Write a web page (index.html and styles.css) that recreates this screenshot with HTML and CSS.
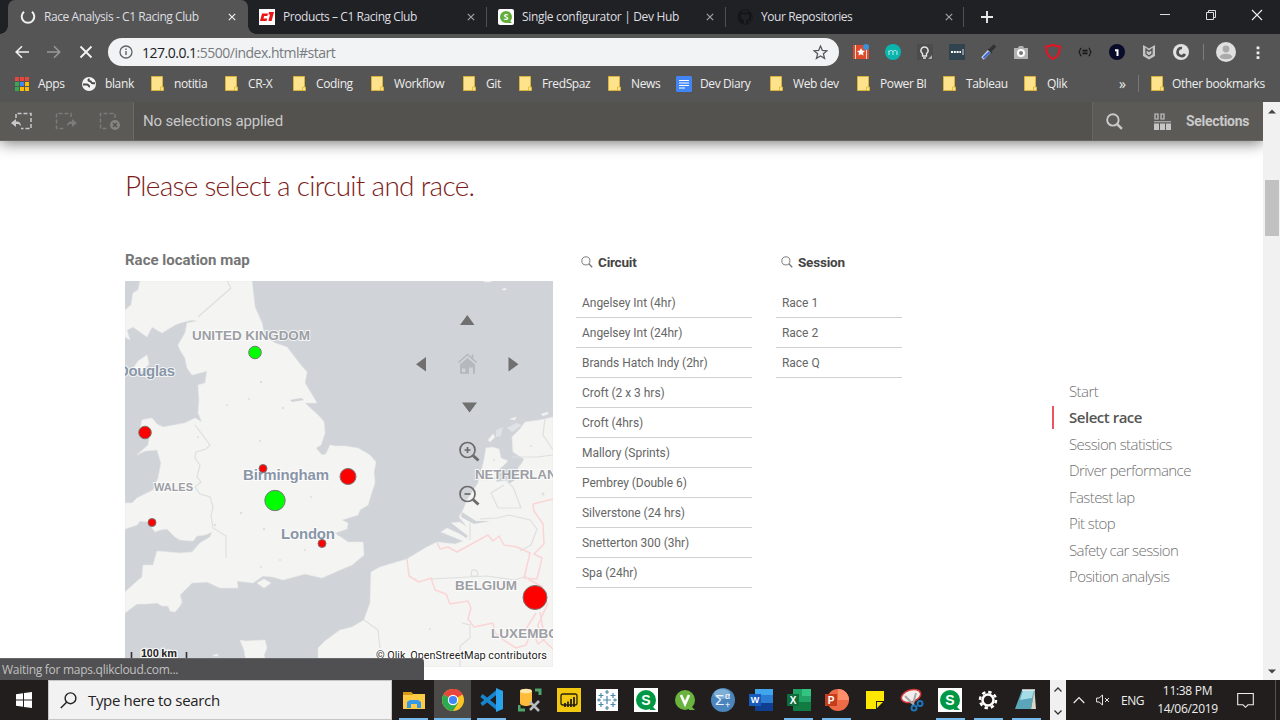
FILE: index.html
```html
<!DOCTYPE html>
<html lang="en">
<head>
<meta charset="utf-8">
<title>Race Analysis - C1 Racing Club</title>
<link rel="stylesheet" href="styles.css">
</head>
<body>
<svg class="defs" aria-hidden="true">
  <symbol id="x" viewBox="0 0 10 10"><path d="M1 1l8 8M9 1l-8 8" fill="none" stroke="currentColor" stroke-width="1.5"/></symbol>
  <symbol id="folder" viewBox="0 0 13 15"><path d="M.5.5h11v10l1 1v3H.5z" fill="#ffe38c" stroke="#d8b43c"/><path d="M9.5 14v-3h3" fill="none" stroke="#e3bd3f"/></symbol>
  <symbol id="lens" viewBox="0 0 16 16"><circle cx="6.5" cy="6.5" r="5.4" fill="none" stroke="currentColor" stroke-width="var(--w)"/><path d="M10.4 10.4l4.6 4.6" stroke="currentColor" stroke-width="calc(var(--w) * 1.3)"/></symbol>
  <symbol id="q" viewBox="0 0 24 24"><path d="M0 0h24v24H0z" fill="#fff"/><path d="M16 16l6 6h-6z" fill="#009845"/><circle cx="12" cy="12" r="10" fill="#009845"/><text x="12" y="17" text-anchor="middle" font-size="14" font-weight="700" fill="#fff">S</text></symbol>
</svg>

<header class="tabs">
  <div class="tab active">
    <svg class="fav" viewBox="0 0 16 16"><path d="M4 2.7A6.3 6.3 0 1 0 12 2.7" fill="none" stroke="#f1f1f1" stroke-width="2"/></svg>
    <span class="t t1">Race Analysis - C1 Racing Club</span><svg class="close"><use href="#x"/></svg>
  </div>
  <div class="tab tab2">
    <svg class="fav" viewBox="0 0 16 16"><path d="M0 0h16v16H0z" fill="#fff"/><path d="M9 4.500H3L1 12h6.500l.7-2.500H4.500l.6-2.500h3.200zM10 3h5l-2.400 9H9.400l1.600-6.500H9.400z" fill="#ed1414"/></svg>
    <span class="t t2">Products – C1 Racing Club</span><svg class="close"><use href="#x"/></svg>
  </div>
  <div class="tab tab3">
    <svg class="fav" viewBox="0 0 16 16"><rect width="16" height="16" rx="2" fill="#fff"/><path d="M11 11l3 3h-4z" fill="#52a535"/><circle cx="8" cy="8" r="6" fill="#62ac3a"/><text x="8" y="11.300" text-anchor="middle" font-size="9" font-weight="700" fill="#fff">S</text></svg>
    <span class="t t3">Single configurator | Dev Hub</span><svg class="close"><use href="#x"/></svg>
  </div>
  <div class="tab tab4">
    <svg class="fav" viewBox="0 0 16 16"><path d="M6 15v-2.500C3 13 3 11 2 11M10 15v-3.500c3-.5 3.500-3 3-5 .2-1.500-.3-2.500-.5-3-1 0-2 1-2 1H5.500s-1-1-2-1c-.5 1-.7 2-.3 3-.7 2-.2 4.500 3 5" fill="none" stroke="#141416" stroke-width="1.700"/><circle cx="8" cy="8" r="7.200" fill="none" stroke="#17181a" stroke-width="1.200"/></svg>
    <span class="t t4">Your Repositories</span><svg class="close"><use href="#x"/></svg>
  </div>
  <svg class="plus" viewBox="0 0 12 12"><path d="M6 0v12M0 6h12" stroke="#e8e8e8" stroke-width="1.900"/></svg>
  <div class="win">
    <svg viewBox="0 0 12 12"><path d="M1 5.500h10" stroke="#ddd"/></svg>
    <svg viewBox="0 0 12 12"><path d="M1.500 3.500h7v7h-7zM3.500 3.500v-2h7v7h-2" fill="none" stroke="#ddd"/></svg>
    <svg viewBox="0 0 12 12"><path d="M1 1l10 10M11 1L1 11" stroke="#eee" stroke-width="1.100"/></svg>
  </div>
</header>

<section class="toolbar">
  <svg class="nav" viewBox="0 0 14 14"><path d="M14 7H1.500M7 1.200L1.200 7 7 12.800" fill="none" stroke="#f1f1f1" stroke-width="1.600"/></svg>
  <svg class="nav" viewBox="0 0 14 14"><path d="M0 7h12.500M7 1.200L12.800 7 7 12.800" fill="none" stroke="#999" stroke-width="1.500"/></svg>
  <svg class="nav" viewBox="0 0 14 14"><path d="M1.500 1.500l11 11M12.500 1.500l-11 11" stroke="#f4f4f4" stroke-width="1.800"/></svg>
  <div class="url">
    <svg viewBox="0 0 14 14"><circle cx="7" cy="7" r="6" fill="none" stroke="#5f6368" stroke-width="1.300"/><path d="M7 6v4M7 3.500v1.400" stroke="#5f6368" stroke-width="1.400"/></svg>
    <span class="addr"><b>127.0.0.1</b>:5500/index.html#start</span>
    <svg class="star" viewBox="0 0 14 14"><path d="M7 1l1.700 4.100 4.400.3-3.400 2.800 1.100 4.300L7 10.200l-3.800 2.300 1.100-4.300L.9 5.400l4.400-.3z" fill="none" stroke="#55585c" stroke-width="1.200"/></svg>
  </div>
  <div class="ext">
    <svg viewBox="0 0 16 16"><path d="M0 1h16v14H0z" fill="#e8e0d8"/><path d="M0 1h2v14H0zM3 1h10v14H3zM14 1h2v14h-2z" fill="#dd4b2a"/><path d="M8 4l1.200 2.600 2.800.3-2 1.900.5 2.800L8 10.300l-2.500 1.300.5-2.800-2-1.900 2.800-.3z" fill="#fff"/><circle cx="13" cy="3" r="3" fill="#3a91dd"/></svg>
    <svg viewBox="0 0 16 16"><circle cx="8" cy="8" r="8" fill="#0ab5ad"/><path d="M4 11V6.500M4 8c0-2 4-2 4 0v3M8 8c0-2 4-2 4 0v3" fill="none" stroke="#c4efed"/></svg>
    <svg viewBox="0 0 16 16"><path d="M0 0h16v16H0z" fill="#4c4c4c"/><path d="M5.500 9.500c-3-2-1.500-6.500 2-6.500s5 4.500 2 6.500V12h-4zM6 14h3" fill="none" stroke="#e5e5e5" stroke-width="1.400"/><path d="M15 11v4h-4z" fill="#aaa"/></svg>
    <svg viewBox="0 0 16 16"><path d="M0 0h16v16H0z" fill="#324350"/><path d="M2 8h10" stroke="#fff" stroke-width="2" stroke-dasharray="2 .8"/><path d="M14 5v6" stroke="#ddd"/></svg>
    <svg viewBox="0 0 16 16"><path d="M1.500 14.500l7.500-8" stroke="#c8d4e8" stroke-width="3.600"/><path d="M2.500 14l6-6" stroke="#3c66cf" stroke-width="2.200"/><path d="M8.500 7l5.500-5.500" stroke="#303235" stroke-width="3.600"/><path d="M7 5l4 4" stroke="#303235" stroke-width="1.500"/></svg>
    <svg viewBox="0 0 16 16"><path d="M1 4h4l1-2h4l1 2h4v11H1z" fill="#b2b2b2"/><circle cx="8" cy="9" r="4" fill="#fff"/><circle cx="8" cy="9" r="2" fill="#777"/></svg>
    <svg viewBox="0 0 16 16"><path d="M8 .8c2 1 4.500 1.500 7 1.700 0 6-2 10-7 12.500C3 12.500 1 8.500 1 2.500 3.500 2.300 6 1.800 8 .8z" fill="none" stroke="#ed1020" stroke-width="1.900"/></svg>
    <svg viewBox="0 0 16 16"><path d="M4.500 4C2 4 4 8 1.500 8 4 8 2 12 4.500 12M11.500 4c2.500 0 .5 4 3 4-2.500 0-.5 4-3 4M5.500 6.300h5M5.500 8h5M5.500 9.700h5" fill="none" stroke="#161616" stroke-width="1.200"/></svg>
    <svg viewBox="0 0 16 16"><circle cx="8" cy="8" r="8" fill="#080c28"/><path d="M6 6.200h2.500V12" fill="none" stroke="#fff" stroke-width="2"/></svg>
    <svg viewBox="0 0 16 16"><path d="M2 1l6 3.500L14 1v11l-6 3.500L2 12z" fill="#c4c4c4"/><path d="M5 10V5l3 2.500L11 5v5l-3 2z" fill="none" stroke="#555" stroke-width="1.300"/></svg>
    <svg viewBox="0 0 16 16"><circle cx="8" cy="8" r="8" fill="#e2e2e2"/><path d="M9 4a4 4 0 1 0 3 6" fill="none" stroke="#505050" stroke-width="2.600"/></svg>
  </div>
  <i class="bar"></i>
  <svg class="avatar" viewBox="0 0 20 20"><circle cx="10" cy="10" r="10" fill="#e0e0e0"/><circle cx="10" cy="7" r="3.400" fill="#aaa"/><path d="M3.500 15c1-4.500 12-4.500 13 0-2 3-11 3-13 0z" fill="#aaa"/></svg>
  <svg class="dots" viewBox="0 0 4 16"><path d="M2 1.500v13.500" stroke="#eee" stroke-width="3" stroke-dasharray="3 2.300"/></svg>
</section>

<nav class="bookmarks">
  <a><svg class="b15" viewBox="0 0 14 14"><path d="M0 2h14" stroke="#e8453c" stroke-width="4" stroke-dasharray="4 1"/><path d="M0 7h4" stroke="#34a853" stroke-width="4"/><path d="M5 7h4" stroke="#4285f4" stroke-width="4"/><path d="M10 7h4" stroke="#fbbc05" stroke-width="4"/><path d="M0 12h4" stroke="#34a853" stroke-width="4"/><path d="M5 12h9" stroke="#fbbc05" stroke-width="4" stroke-dasharray="4 1"/></svg><span>Apps</span></a>
  <a><svg class="b15" viewBox="0 0 14 14"><circle cx="7" cy="7" r="7" fill="#f3f3f3"/><path d="M1 7.500h4c2 0 1 2 3 2M7.500 1.800c-2 1-1 2.500.5 2.500s1 2 3 2h2" fill="none" stroke="#4b4b4b" stroke-width="1.900"/></svg><span>blank</span></a>
  <a><svg class="fo"><use href="#folder"/></svg><span>notitia</span></a>
  <a><svg class="fo"><use href="#folder"/></svg><span>CR-X</span></a>
  <a><svg class="fo"><use href="#folder"/></svg><span>Coding</span></a>
  <a><svg class="fo"><use href="#folder"/></svg><span>Workflow</span></a>
  <a><svg class="fo"><use href="#folder"/></svg><span>Git</span></a>
  <a><svg class="fo"><use href="#folder"/></svg><span>FredSpaz</span></a>
  <a><svg class="fo"><use href="#folder"/></svg><span>News</span></a>
  <a><svg class="b16" viewBox="0 0 16 16"><rect width="16" height="16" rx="1.500" fill="#4285f4"/><path d="M3 4.500h10M3 7h10M3 9.500h10M3 12h6" stroke="#fff" stroke-width="1.200"/></svg><span>Dev Diary</span></a>
  <a><svg class="fo"><use href="#folder"/></svg><span>Web dev</span></a>
  <a><svg class="fo"><use href="#folder"/></svg><span>Power BI</span></a>
  <a><svg class="fo"><use href="#folder"/></svg><span>Tableau</span></a>
  <a><svg class="fo"><use href="#folder"/></svg><span>Qlik</span></a>
  <a class="more">»</a>
  <a class="other"><svg class="fo"><use href="#folder"/></svg><span>Other bookmarks</span></a>
</nav>

<div class="viewport">
  <div class="page">
    <div class="selbar">
      <div class="selicons">
        <svg viewBox="0 0 22 18"><path d="M5 6V1.500h15v15H10" fill="none" stroke="#c9c9c9" stroke-width="1.500" stroke-dasharray="4 2"/><path d="M0 11l5-4v2.500c4 0 5 2 5 5-1-2-2-2.500-5-2.500V15z" fill="#c9c9c9"/></svg>
        <svg viewBox="0 0 22 18"><path d="M16 5V1.500H1.500v15H9" fill="none" stroke="#7c7b79" stroke-width="1.500" stroke-dasharray="4 2"/><path d="M22 11l-5-4v2.500c-4 0-5 2-5 5 1-2 2-2.500 5-2.500V15z" fill="#7c7b79"/></svg>
        <svg viewBox="0 0 22 18"><path d="M16 6V1.500H1.500v15H9" fill="none" stroke="#7c7b79" stroke-width="1.500" stroke-dasharray="4 2"/><circle cx="16" cy="13" r="5" fill="#858481"/><path d="M14 11l4 4M18 11l-4 4" stroke="#555451" stroke-width="1.500"/></svg>
      </div>
      <div class="selmsg"><span>No selections applied</span></div>
      <div class="seltools">
        <svg class="slens"><use href="#lens"/></svg>
        <svg class="sgrid" viewBox="0 0 17 17"><path d="M1 1h3v5H1zM7 1h3v5H7z" fill="none" stroke="#c6c6c6" stroke-width="1.200"/><path d="M0 8.700h17" stroke="#a8a8a8" stroke-width="1.300"/><path d="M0 10.500h5V17H0zM6 10.500h5V17H6zM12 10.500h5V17h-5z" fill="#c6c6c6"/></svg>
        <b>Selections</b>
      </div>
    </div>

    <main class="content">
      <div class="left">
        <h1>Please select a circuit and race.</h1>
        <div class="cols">
          <section class="mapbox">
            <h2>Race location map</h2>
            <svg class="map" viewBox="125 281 428 386">
              <path d="M125 281h428v386H125z" fill="#d0d3d8"/>
              <g fill="#f4f4f2" stroke="#eaebea" stroke-width=".6" stroke-linejoin="round">
                <path d="M140 281L138 290 133 293 131 305 125 310V337L130 340 127 330 133 327 147 337 152 327 162 333 175 325 180 323 192 320 197 321 187 323 185 333 178 345 180 350 185 358 187 368 192 375 200 373 207 371 205 383 198 385 199 400 198 413 202 422 195 418 185 423 163 427 157 424 152 418 146 419 142 420 140 430 150 435 148 445 137 455 145 451 157 450 161 463 158 478 153 490 137 498 132 503 125 503V529L137 525 140 521 148 522 155 532 160 530 167 529 175 537 180 540 193 541 197 536 205 535 212 532 210 537 200 543 192 552 180 553 157 551 153 565 143 565 142 577 136 582 125 592V613L137 604 145 604 157 603 162 606 168 606 170 611 175 612 180 606 182 602 180 595 185 590 192 583 207 582 220 588 238 588 237 581 253 583 263 576 273 577 283 580 305 574 322 578 340 570 352 565 364 555 363 542 348 542 335 533 347 529 348 523 342 520 358 515 360 510 368 505 371 495 375 483 374 472 376 462 370 455 358 448 345 446 335 446 330 445 326 454 322 455 316 448 321 445 325 433 324 422 320 417 305 403 317 403 305 383 307 372 300 364 287 347 275 343 265 337 262 323 255 307 252 281z"/>
                <path d="M132 370L138 361 147 355 149 364 140 373zM257 583L264 579 271 583 264 588z"/>
                <path d="M340 630L352 627 364 620 370 603 371 572 380 567 407 559 425 548 437 542 455 544 463 541 441 532 447 528 466 537 469 540 450 523 460 522 467 527 459 517 463 510 467 500 478 483 484 460 486 448 492 447 499 449 501 458 508 461 503 466 498 470 496 482 508 480 522 463 524 459 513 452 512 437 520 429 525 422 540 420 553 417V667H318V648L325 641z"/>
                <path d="M240 640L245 641 265 640 267 648 264 655 268 667H247L244 650zM488 440L493 434 495 437 490 442zM541 414l7-2v2l-5 2zM510 419l6-2-1 3zM502 289l4-1v2h-3zM483 281h9l-2 1h-5zM213 655l5-1v2h-4z"/>
              </g>
              <g fill="#d0d3d8">
                <path d="M290 400l11-2 3 2-12 2zM462 512l14 9 14 0-16 3-13-7zM450 522l18 14-2 2-17-12zM337 533l10-2v3l-9 2zM505 469l15-9-5 20-6 4z"/>
                <path d="M496 430l7-3-2 9-5 1zM507 428l9-5 6 2-10 7z" fill="#dfe3e7"/>
              </g>
              <g fill="none" stroke="#dedfdf" stroke-width="1.200">
                <path d="M227 281l4 7-33 29M195 425l15 20-4 4-10 3-1 6 5 7-3 12 4 5-6 5 5 7 10 3 3 10-2 9 2 12 13 8v22M364 620l14 10 2 18M431 579l56-3 28 4 12-4M462 623l8 2v13l-10 8v21M470 540v-17M480 519l17-1 12-3 21 5 7 9-6 16-11 6M484 480l18-3 11 10 8 21h-23l-7-15 13-8M545 418l-2 17 10 15M512 457h25l16-2M472 570q6-1 6 6h-7z"/>
              </g>
              <g fill="none" stroke="#fbd5d5" stroke-width="1.500" stroke-linejoin="round">
                <path d="M407 559l2 17 10 6 12-4 4 12 11 4 4 10 18-3 3 7-3 11 6 8 19-4 2 10 10 8 11 7 10-3 6-15 6 14 7-5M437 542l3 7 8-2 9 5 31-17 5 6 6-5 5 9 13 2 13 6-6 25 13 1 5-21-8-4 10-10-1-20-9-13-1-7 20-5M528 579l15 8M536 613l-12 19M540 612l4 23M548 603l-10 22 2 12 13 12"/>
              </g>
              <g fill="#dde0e2"><circle cx="227" cy="405" r="1"/><circle cx="261" cy="382" r="1.200"/><circle cx="249" cy="399" r="1"/><circle cx="283" cy="408" r="1.300"/><circle cx="260" cy="441" r="1"/><circle cx="198" cy="437" r="1"/><circle cx="241" cy="513" r="1.200"/><circle cx="215" cy="525" r="1.300"/><circle cx="264" cy="529" r="1.200"/><circle cx="311" cy="497" r="1"/><circle cx="305" cy="550" r="1"/><circle cx="280" cy="560" r="1"/><circle cx="261" cy="567" r="1"/><circle cx="531" cy="446" r="1"/><circle cx="494" cy="460" r="1"/><circle cx="543" cy="494" r="1.500"/><circle cx="430" cy="629" r="1"/></g>
              <g class="place" stroke="#fff" stroke-width="2" stroke-opacity=".75" paint-order="stroke">
                <text x="192" y="339.500" textLength="118">UNITED KINGDOM</text>
                <text x="475" y="479" textLength="100">NETHERLANDS</text>
                <text x="455" y="590" textLength="62">BELGIUM</text>
                <text x="491" y="638" textLength="98">LUXEMBOURG</text>
                <text x="154" y="491" textLength="39" class="small">WALES</text>
                <g class="city"><text x="118" y="376" textLength="57">Douglas</text><text x="243" y="480" textLength="86">Birmingham</text><text x="281" y="539" textLength="54">London</text></g>
              </g>
              <g fill="red" stroke="#777" stroke-width="1">
                <circle cx="145" cy="432.500" r="6.300"/><circle cx="263" cy="468.500" r="4"/><circle cx="348" cy="476.500" r="8"/><circle cx="152" cy="522.500" r="4"/><circle cx="322" cy="543.500" r="4"/><circle cx="535" cy="597.500" r="12"/>
                <g fill="lime"><circle cx="255" cy="352.500" r="6.300"/><circle cx="275" cy="500.500" r="10.200"/></g>
              </g>
              <g fill="#707070">
                <path d="M460 325h14.500l-7.200-10zM462 402.500h15l-7.500 10zM426 357v14.500l-10-7.200zM508.500 357v14.500l10-7.200z"/>
                <path d="M460 364.500l7.500-6.500 7.500 6.500v9.300h-2v-6.300h-4v6.300h-9zM462 368.500v3.500h3.500v-3.500z" fill="#b5b8bc" fill-rule="evenodd"/>
                <path d="M458.500 362.500l9-8 9 8M472.500 358v-3.500" fill="none" stroke="#b5b8bc" stroke-width="1.600"/>
              </g>
              <g fill="none" stroke="#6b6b6b" stroke-width="1.700"><circle cx="467.500" cy="450" r="7.500"/><path d="M464.500 450h6M467.500 447v6"/><path d="M473 455.500l5.500 5" stroke-width="3"/><circle cx="467.500" cy="494" r="7.500"/><path d="M464.500 494h6"/><path d="M473 499.500l5.500 5" stroke-width="3"/></g>
              <path d="M131.500 652v7h55v-7" fill="none" stroke="#333" stroke-width="1.600"/>
              <g stroke="#fff" stroke-width="2.500" stroke-opacity=".8" paint-order="stroke"><text x="141" y="657" textLength="36" class="scale">100 km</text><text x="376" y="659" textLength="171" class="copy">© Qlik, OpenStreetMap contributors</text></g>
            </svg>
          </section>
          <section class="list circuit">
            <h3><svg><use href="#lens"/></svg>Circuit</h3>
            <ul><li>Angelsey Int (4hr)</li><li>Angelsey Int (24hr)</li><li>Brands Hatch Indy (2hr)</li><li>Croft (2 x 3 hrs)</li><li>Croft (4hrs)</li><li>Mallory (Sprints)</li><li>Pembrey (Double 6)</li><li>Silverstone (24 hrs)</li><li>Snetterton 300 (3hr)</li><li>Spa (24hr)</li></ul>
          </section>
          <section class="list session">
            <h3><svg><use href="#lens"/></svg>Session</h3>
            <ul><li>Race 1</li><li>Race 2</li><li>Race Q</li></ul>
          </section>
        </div>
      </div>
      <aside class="toc"><a>Start</a><a class="on">Select race</a><a>Session statistics</a><a>Driver performance</a><a>Fastest lap</a><a>Pit stop</a><a>Safety car session</a><a>Position analysis</a></aside>
    </main>
    <div class="status">Waiting for maps.qlikcloud.com...</div>
  </div>
  <div class="scroll">
    <svg viewBox="0 0 8 5"><path d="M0 4.500h8L4 .5z" fill="#444"/></svg>
    <i></i>
    <svg viewBox="0 0 8 5"><path d="M0 .5h8L4 4.500z" fill="#444"/></svg>
  </div>
</div>

<footer class="taskbar">
  <div class="start"><svg viewBox="0 0 16 16"><path d="M0 2.200L7 1.200v6.300H0zM8 1l8-1v7.500H8zM0 8.500h7v6.300l-7-1zM8 8.500h8V16l-8-1z" fill="#fff"/></svg></div>
  <div class="search"><svg viewBox="0 0 17 17"><circle cx="10.500" cy="6.300" r="5.400" fill="none" stroke="#222" stroke-width="1.400"/><path d="M6.600 10.200L.8 16" stroke="#222" stroke-width="1.500"/></svg><span>Type here to search</span></div>
  <div class="apps">
    <i class="run"><svg viewBox="0 0 24 24"><path d="M1 4h8l2 2h12v15H1z" fill="#ffcb45"/><path d="M1 4h8l2 3H1z" fill="#d89a13"/><path d="M5 20v-6l3-2h8l3 2v6h-4v-4H9v4z" fill="#3598e8"/></svg></i>
    <i class="run cur"><svg viewBox="0 0 24 24"><circle cx="12" cy="12" r="11" fill="#f9c623"/><path d="M12 12L2.500 6.500A11 11 0 0 1 21.500 6.500z" fill="#e8453c"/><path d="M12 12L2.500 6.500A11 11 0 0 0 12 23l5-8z" fill="#2da94f"/><path d="M12 7h9.800l-.4-.8A11 11 0 0 0 12 1z" fill="#e8453c"/><circle cx="12" cy="12" r="5.200" fill="#fff"/><circle cx="12" cy="12" r="4.100" fill="#4285f4"/></svg></i>
    <i class="run"><svg viewBox="0 0 24 24"><path d="M2.500 7.500L18 20M2.500 16.500L18 4" fill="none" stroke="#1786cf" stroke-width="3.600"/><path d="M17 0l7 3v18l-7 3z" fill="#2ba3ec"/></svg></i>
    <i><svg viewBox="0 0 24 24"><path d="M2 3v12c0 4 12 4 12 0V3z" fill="#fdbc3a"/><ellipse cx="8" cy="3" rx="6" ry="2.300" fill="#ffe7a7"/><path d="M17 2h5v5M1 17v5h6" fill="none" stroke="#4fa36b" stroke-width="3"/><path d="M12 22l9-9M12 14l9 9" stroke="#bbb" stroke-width="2.500"/></svg></i>
    <i><svg viewBox="0 0 24 24"><path d="M0 0h24v24H0z" fill="#f2c811"/><rect x="4" y="6" width="16" height="11" rx="2" fill="none" stroke="#26220f" stroke-width="1.300"/><path d="M8 19v-4M11 19v-5.500M14 19v-8M17 19V9" stroke="#26220f" stroke-width="1.800"/></svg></i>
    <i><svg viewBox="0 0 24 24"><path d="M1 1h22v22H1z" fill="#fff"/><path d="M12 8v8M8 12h8M12 2v4M10 4h4M12 18v4M10 20h4M6 5v5M3.500 7.500h5M18 5v5M15.500 7.500h5M6 14v5M3.500 16.500h5M18 14v5M15.500 16.500h5M2 12h4M4 10.500v3M18 12h4M20 10.500v3" stroke="#4b87a8" stroke-width="1.200"/></svg></i>
    <i><svg><use href="#q"/></svg></i>
    <i><svg viewBox="0 0 24 24"><path d="M16 16l6 6h-6z" fill="#6ab43e"/><circle cx="12" cy="12" r="10" fill="#6ab43e"/><path d="M8 7l4 9 4-9" fill="none" stroke="#fff" stroke-width="2.600"/></svg></i>
    <i><svg viewBox="0 0 24 24"><circle cx="12" cy="12" r="12" fill="#4a86bd"/><ellipse cx="11" cy="6" rx="8" ry="5" fill="#80afd6"/><text x="4" y="17" font-size="15" fill="#eef5fc">Σ</text><text x="14" y="11" font-size="9" fill="#fff">α</text><text x="14" y="20" font-size="9" fill="#fff">+</text></svg></i>
    <i><svg viewBox="0 0 24 24"><path d="M6 1h18v22H6z" fill="#2b7cd3"/><path d="M6 1h18v6H6z" fill="#41a5ee"/><path d="M6 15h18v8H6z" fill="#103f91"/><path d="M0 6h12v12H0z" fill="#185abd"/><text x="6" y="15" text-anchor="middle" font-size="9" font-weight="700" fill="#fff">W</text></svg></i>
    <i class="run"><svg viewBox="0 0 24 24"><path d="M6 1h18v22H6z" fill="#21a366"/><path d="M15 1h9v7h-9z" fill="#33c481"/><path d="M6 14h18v9H6z" fill="#107c41"/><path d="M0 6h12v12H0z" fill="#0e6c3c"/><text x="6" y="15.500" text-anchor="middle" font-size="10" font-weight="700" fill="#fff">X</text></svg></i>
    <i class="run"><svg viewBox="0 0 24 24"><circle cx="13" cy="12" r="11" fill="#ed6c47"/><path d="M13 1a11 11 0 0 1 11 11H13z" fill="#ff8f6b"/><path d="M0 6h12v12H0z" fill="#c43e1c"/><text x="6" y="15.500" text-anchor="middle" font-size="10" font-weight="700" fill="#fff">P</text></svg></i>
    <i><svg viewBox="0 0 24 24"><path d="M3 3h18v18H3z" fill="#ffe800"/><path d="M13 13h8v8h-8z" fill="#1e1c1a"/><path d="M14 20v-6h6z" fill="#ffe800"/></svg></i>
    <i><svg viewBox="0 0 24 24"><ellipse cx="11" cy="8" rx="10" ry="6" transform="rotate(-18 11 8)" fill="#f2eeee" stroke="#d43838" stroke-width="1.500"/><path d="M5 8l9 9M16 5l-3 11" stroke="#aaa" stroke-width="2"/><circle cx="14" cy="20" r="2.500" fill="none" stroke="#1d76bb" stroke-width="2"/><circle cx="20" cy="15.500" r="2.500" fill="none" stroke="#1d76bb" stroke-width="2"/></svg></i>
    <i class="run"><svg><use href="#q"/></svg></i>
    <i class="run"><svg viewBox="0 0 24 24"><circle cx="12" cy="12" r="5.500" fill="none" stroke="#fff" stroke-width="2.500"/><circle cx="12" cy="12" r="8" fill="none" stroke="#fff" stroke-width="2.500" stroke-dasharray="3.400 2.880"/></svg></i>
    <i class="run"><svg viewBox="0 0 24 24"><path d="M8 2h13l-4 19H1z" fill="#5aa5b8"/><path d="M9 2h11l-2 8-12 2z" fill="#a6dce5"/><path d="M20.500 2L22 21h-5z" fill="#d9d6c7"/><path d="M8 2h13" stroke="#eee" stroke-width="1.500"/></svg></i>
  </div>
  <div class="pager"><svg viewBox="0 0 8 5"><path d="M.5 4.500l3.500-3.500 3.500 3.500" fill="none" stroke="#333" stroke-width="1.300"/></svg><svg viewBox="0 0 8 5"><path d="M.5.5L4 4 7.500.5" fill="none" stroke="#333" stroke-width="1.300"/></svg></div>
  <div class="tray">
    <svg class="up" viewBox="0 0 12 8"><path d="M.7 7L6 1.500 11.300 7" fill="none" stroke="#eee" stroke-width="1.200"/></svg>
    <svg class="vol" viewBox="0 0 14 12"><path d="M.6 4h2.500L6.500 1v10L3.100 8H.6zM9 4l4 4M13 4L9 8" fill="none" stroke="#e5e5e5"/></svg>
    <span class="lang">ENG</span>
    <span class="clock"><span>11:38 PM</span><span class="date">14/06/2019</span></span>
    <svg class="note" viewBox="0 0 17 17"><path d="M.7 1.500h15.600v11.300H11L8.500 15.300 6 12.800H.7z" fill="none" stroke="#eee" stroke-width="1.100"/></svg>
    <i class="peek"></i>
  </div>
</footer>
</body>
</html>
```
FILE: styles.css
```css
*{box-sizing:border-box}
body{margin:0;width:1280px;height:720px;overflow:hidden;display:flex;flex-direction:column;background:#fff;font:12px "Open Sans","Noto Sans",sans-serif;color:#eee}
svg{display:block;flex:none}
.defs{position:absolute;width:0;height:0}
.tabs{height:34px;flex:none;background:radial-gradient(circle at 0 0,#202124 7.500px,#555 8px) 0 100%/8px 8px no-repeat,radial-gradient(circle at 100% 0,#202124 7.500px,#555 8px) 248px 100%/8px 8px no-repeat,#202124;display:flex;align-items:center}
.tab{display:flex;align-items:center;height:34px;white-space:nowrap}
.tab.active{margin-left:8px;width:240px;background:#555;border-radius:7px 7px 0 0;padding-left:12px}
.fav{width:16px;height:16px}
.t{margin:0 0 2px 8px;flex:none;color:#dedfe0;letter-spacing:-.43px}
.close{width:8px;height:8px;color:#a0a1a3}
.active .close{color:#eee}
.t1{width:184px}
.tab2{width:239px;padding-left:11px}.t2{width:184px}
.tab3{width:239px;padding-left:11px}.t3{width:184px;letter-spacing:-.33px}
.tab4{width:238px;padding-left:11px}.t4{width:184px}
.tab2,.tab3,.tab4{background:linear-gradient(#505154,#505154) 100% 50%/1px 20px no-repeat}
.plus{width:12px;height:12px;margin-left:17px}
.win{margin-left:auto;display:flex;gap:34px;margin-right:17px;padding-bottom:5px}
.win svg{width:12px;height:12px}
.toolbar{height:36px;flex:none;background:#555;display:flex;align-items:center}
.nav{width:14px;height:14px;margin-left:15px;margin-right:3px}
.nav+.nav{margin-left:15px}
.url{width:731px;height:28px;border-radius:14px;background:#f1f3f4;margin-left:12px;padding:0 11px;display:flex;align-items:center}
.url svg{width:14px;height:14px}
.addr{font-size:14px;color:#777a7e;margin-left:9px;letter-spacing:-.5px}
.addr b{font-weight:400;color:#202124}
.url .star{margin-left:auto;width:15px;height:15px}
.ext{display:flex;gap:16px;margin-left:14px}
.ext svg{width:16px;height:16px}
.bar{width:1px;height:16px;background:#7d7d7d;margin-left:14px}
.avatar{width:20px;height:20px;margin-left:12px}
.dots{width:4px;height:15px;margin-left:20px}
.bookmarks{height:32px;flex:none;background:#555;display:grid;grid-template-columns:67px 69px 74px 68px 78px 92px 56px 89px 68px 94px 87px 86px 81px 95px 19px 1fr;padding:0 0 5px 15px;align-items:center;white-space:nowrap}
.bookmarks a{display:flex;align-items:center;letter-spacing:-.38px;color:#eee}
.bookmarks span{margin-left:9px}
.bookmarks .fo+span{margin-left:10px}
.b15{width:14px;height:14px}.b16{width:16px;height:16px}
.bookmarks .b16+span{margin-left:8px}
.fo{width:13px;height:15px}
.bookmarks .more{font-size:14px}
.bookmarks .other{border-left:1px solid #777;padding-left:12px}
.bookmarks .other span{margin-left:8px}
.viewport{height:578px;flex:none;display:flex}
.page{width:1263px;position:relative;background:#fff;overflow:hidden;display:flex;flex-direction:column}
.selbar{height:39px;flex:none;background:#53524f;border-bottom:1px solid #686764;display:flex;box-shadow:0 1px 16px rgba(0,0,0,.6);font-family:Roboto,sans-serif;color:#c9c9c9}
.selicons{width:134px;background:#5b5a57;border-right:1px solid #6b6a67;display:flex;align-items:center;gap:22px;padding-left:11px}
.selicons svg{width:22px;height:18px}
.selmsg{flex:1;display:flex;align-items:center;padding-left:9px;font-size:15px;letter-spacing:-.18px}
.seltools{width:171px;background:#5b5a57;border-left:1px solid #676663;display:flex;align-items:center;padding-left:13px;font-size:14px}
.slens{--w:1.8;width:17px;height:17px}
.sgrid{width:17px;height:17px;margin:0 15px 0 31px}
.seltools b{letter-spacing:-.3px;margin-bottom:1px}
.content{display:flex;padding-left:125px}
.left{width:927px;flex:none}
h1{font:300 28px/34px Lato,sans-serif;margin:27px 0 0;color:#7c1c18;white-space:nowrap;letter-spacing:-.72px}
.cols{display:flex;margin-top:48px}
.mapbox{width:451px;flex:none}
h2{font:700 15px/20px Roboto,sans-serif;margin:0 0 11px;color:#757575}
.map{width:428px;height:386px;font-family:"Liberation Sans",Arial,sans-serif}
.place{font-size:13.500px;fill:#9c9fa5;font-weight:700}
.small{font-size:11px}
.city{font-size:15px;fill:#8996a8}
.scale{font-size:11px;fill:#222;font-weight:700}
.copy{font:11px Roboto,sans-serif;fill:#222}
.list{font-family:Roboto,sans-serif}
.circuit{width:176px;margin-right:24px}
.session{width:126px}
h3{margin:2px 0 16px;height:20px;display:flex;align-items:center;gap:5px;padding-left:5px;font-size:13.500px;letter-spacing:-.2px;color:#444}
h3 svg{--w:1.3;width:12px;height:12px;color:#777}
ul{list-style:none;margin:0;padding:0}
li{height:30px;border-bottom:1px solid #d0d0d0;padding-left:6px;line-height:31px;font-size:12px;color:#666;white-space:nowrap;letter-spacing:-.03px}
.toc{margin-top:236.500px;font:300 15px/26.500px "Open Sans",sans-serif;width:200px}
.toc a{display:flex;align-items:center;height:26.500px;padding-left:17px;color:#6f6f6f;letter-spacing:-.58px;white-space:nowrap}
.toc .on{font-weight:600;color:#555;letter-spacing:-.48px;background:linear-gradient(#ea5560,#ea5560) 0 50%/2px 23px no-repeat}
.status{position:absolute;left:0;bottom:0;width:424px;height:22px;background:#504f51;border-top:1px solid #666;border-radius:0 4px 0 0;color:#c0c0c0;padding-left:2px;line-height:22px;letter-spacing:-.28px}
.scroll{width:17px;background:#f1f1f1;display:flex;flex-direction:column;align-items:center;padding:7px 0 6px}
.scroll svg{width:8px;height:5px}
.scroll i{width:14px;height:56px;background:#c1c1c1;margin:66px 0 auto}
.taskbar{height:40px;flex:none;background:#211e1d;display:flex}
.start{width:48px;display:flex;align-items:center;justify-content:center}
.start svg{width:16px;height:16px}
.search{width:344px;background:#f2f2f2;border:1px solid #c6c6c6;color:#222;display:flex;align-items:center;font-size:15px;padding-left:11px;gap:11px}
.search svg{width:17px;height:17px}
.search span{letter-spacing:-.33px}
.apps{width:658px;padding-left:2.500px;display:flex}
.apps i{flex:none;width:37.900px;display:flex;align-items:center;justify-content:center;font:normal 12px "Liberation Sans",sans-serif}
.apps i:nth-child(-n+8){width:38.700px}
.apps svg{width:24px;height:24px}
.run{background:linear-gradient(#76b9ed,#76b9ed) 50% 100%/29px 2px no-repeat}
.run.cur{background:linear-gradient(#76b9ed,#76b9ed) 50% 100%/37px 2px no-repeat,linear-gradient(#4c4a49,#4c4a49) 50%/37px 40px no-repeat}
.pager{width:16px;margin-right:7px;background:#f0f0f0;display:flex;flex-direction:column;align-items:center;justify-content:space-between;padding:7px 0 5px}
.pager svg{width:8px;height:5px}
.tray{flex:1;display:flex;align-items:center;color:#eee}
.up{width:12px;height:8px}
.vol{width:14px;height:12px;margin-left:11px}
.lang{width:35px;margin-left:11px;letter-spacing:-.5px}
.clock{width:63px;display:flex;flex-direction:column;align-items:center;line-height:18px;letter-spacing:-.3px;white-space:nowrap}
.note{width:17px;height:17px;margin-left:18px}
.peek{width:1px;height:40px;margin-left:auto;margin-right:4px;background:#55524f}
```
